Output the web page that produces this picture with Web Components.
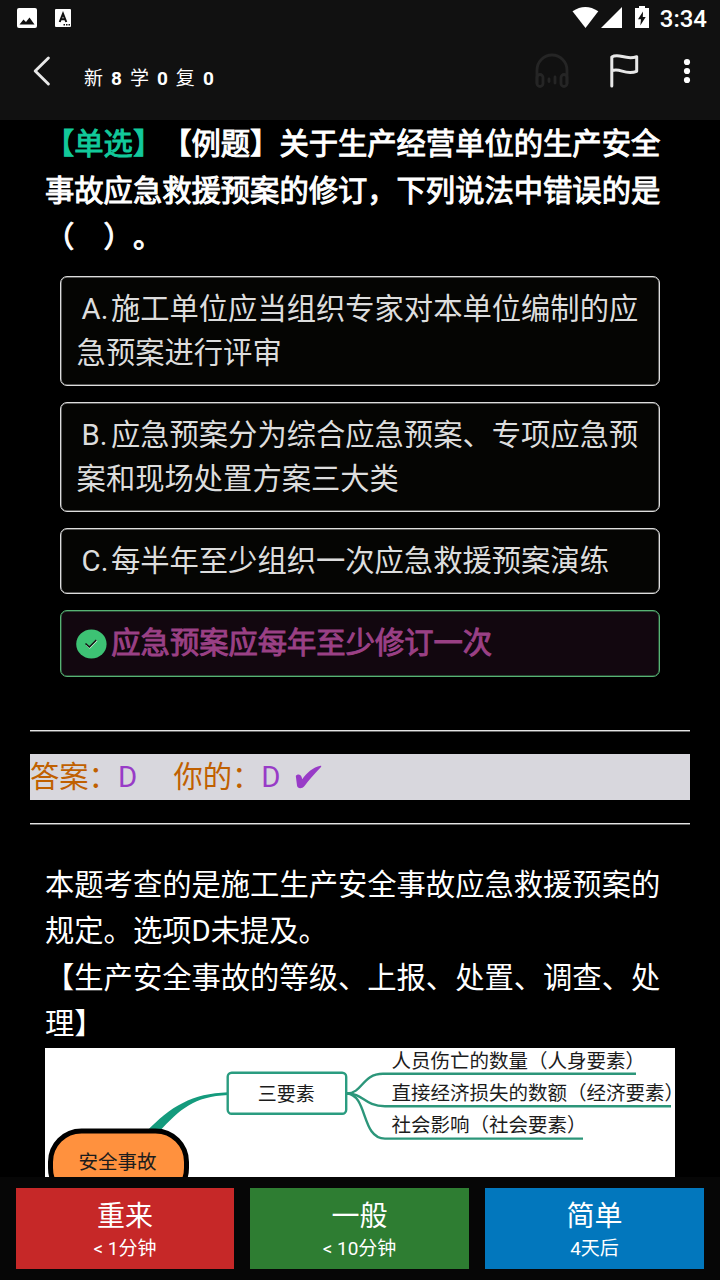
<!DOCTYPE html>
<html lang="zh-CN">
<head>
<meta charset="utf-8">
<title>复习</title>
<style>
    html, body {
        margin: 0;
        background: #000;
    }

    body {
        width: 720px;
        height: 1280px;
        overflow: hidden;
        color: #fff;
        font-family: Roboto, "Noto Sans CJK SC", sans-serif;
        text-spacing-trim: space-all;
    }
</style>
</head>
<body>
<quiz-app></quiz-app>
<script>
class StatusBar extends HTMLElement {
    constructor() {
        super();
        this.root = this.attachShadow({ mode: "open" });
    }

    connectedCallback() {
        this.root.innerHTML = `
            <style>
                :host {
                    display: flex;
                    justify-content: space-between;
                    height: 36px;
                    font-size: 24px;
                    font-weight: 500;
                    line-height: 38px;
                }

                svg {
                    display: block;
                }

                .right {
                    display: flex;
                    padding-right: 13px;
                }
            </style>
            <svg width="80" height="36">
                <rect x="17" y="8" width="20" height="20" rx="2" fill="#fff"/>
                <path d="M19.5 24.5L23.5 19.5L26 22L29.5 17.5L34.5 24.5Z" fill="#111"/>
                <rect x="55" y="9" width="16" height="18" rx="1" fill="#fff"/>
                <path d="M59.7 22L63 13.8L66.3 22M61 19.2H65" fill="none" stroke="#111" stroke-width="2"/>
                <path d="M63.5 24.7H70" stroke="#111" stroke-width="1.5" stroke-dasharray="1.5 1"/>
            </svg>
            <div class="right">
                <svg width="88" height="36">
                    <path d="M0.5 11.3Q13.3 2.5 26.3 11.3L13.5 28Z" fill="#fff"/>
                    <path d="M29 28L50 7V28Z" fill="#fff"/>
                    <path d="M63 8H67V6H73V8H77V28H63Z" fill="#fff"/>
                    <path d="M71 11.5L66 19.3H69L68.3 25.5L73.7 17H70.8Z" fill="#111"/>
                </svg>
                <span>3:34</span>
            </div>
        `;
    }
}

class ToolBar extends HTMLElement {
    constructor() {
        super();
        this.root = this.attachShadow({ mode: "open" });
    }

    connectedCallback() {
        this.root.innerHTML = `
            <style>
                :host {
                    display: flex;
                    height: 84px;
                }

                svg {
                    display: block;
                }

                .counts {
                    flex: 1;
                    padding-top: 30px;
                    font-size: 19px;
                    line-height: 26px;
                    word-spacing: 3.3px;
                    white-space: nowrap;
                }
            </style>
            <svg width="84" height="84">
                <path d="M48.4 22L35.2 35L48.4 48" fill="none" stroke="#e8e8e8" stroke-width="2.9" stroke-linecap="round" stroke-linejoin="round"/>
            </svg>
            <div class="counts"><slot></slot></div>
            <svg width="190" height="84" fill="none" stroke-linecap="round" stroke-linejoin="round">
                <g stroke="#252525" stroke-width="2.8">
                    <path d="M7 47V34A15 15 0 0 1 37 34V47"/>
                    <rect x="7" y="38.5" width="6" height="12" rx="3"/>
                    <rect x="31" y="38.5" width="6" height="12" rx="3"/>
                    <path d="M19 43V45.5M25 41V47"/>
                </g>
                <path d="M81.8 50V21C89 16.5 95 24.5 106.7 20.7V35.3C95 40 90 31 82 34.7" stroke="#e8e8e8" stroke-width="3"/>
                <g fill="#fff">
                    <circle cx="157" cy="26" r="3.1"/>
                    <circle cx="157" cy="35" r="3.1"/>
                    <circle cx="157" cy="44" r="3.1"/>
                </g>
            </svg>
        `;
    }
}

class QuizOption extends HTMLElement {
    constructor() {
        super();
        this.root = this.attachShadow({ mode: "open" });
    }

    connectedCallback() {
        const letter = this.getAttribute("letter");
        const mark = letter
            ? `<span class="letter">${letter}.</span>`
            : `<svg class="tick" width="31" height="30">
                    <ellipse cx="15.4" cy="15" rx="15.2" ry="14.5" fill="#3dc274"/>
                    <path d="M10.2 15.5L13.7 19L21 11.5" fill="none" stroke="#d8f5e3" stroke-width="1.2"/>
                    <path d="M9.5 14.5L13.4 18L20.3 11" fill="none" stroke="#101010" stroke-width="1.5"/>
                </svg>`;
        this.root.innerHTML = `
            <style>
                :host {
                    display: block;
                    box-sizing: border-box;
                    border: 1px solid #ddd;
                    border-radius: 7px;
                    box-shadow: inset 0 0 0 0.5px #aaa;
                    padding: 10px 15px 10px 15.6px;
                    background: #050503;
                    color: #ddd;
                    line-height: 44px;
                }

                :host([correct]) {
                    border-color: #57b374;
                    box-shadow: inset 0 0 0 0.5px #3f8556;
                    background: #12070f;
                    color: #9a4085;
                    -webkit-text-stroke: 1px #9a4085;
                }

                .letter {
                    display: inline-block;
                    box-sizing: border-box;
                    width: 34.3px;
                    padding-left: 5px;
                }

                .tick {
                    margin: 0 4.7px 0 -1px;
                    vertical-align: -6px;
                }
            </style>
            ${mark}<slot></slot>
        `;
    }
}

class AnswerLine extends HTMLElement {
    constructor() {
        super();
        this.root = this.attachShadow({ mode: "open" });
    }

    connectedCallback() {
        this.root.innerHTML = `
            <style>
                :host {
                    display: block;
                    line-height: 46.4px;
                }

                .rule {
                    height: 1px;
                    background: #e4e4e4;
                    box-shadow: 0 1px #666;
                }

                .band {
                    margin: 23px 0 22.6px;
                    background: #d8d7dd;
                    color: #c06000;
                    white-space: pre;
                }

                b {
                    font-weight: 400;
                    color: #983bc7;
                }

                svg {
                    vertical-align: -2px;
                }
            </style>
            <div class="rule"></div>
            <div class="band">答案：<b>${this.getAttribute("answer")}</b>     你的：<b>${this.getAttribute("yours")}</b>  <svg width="27" height="24" fill="#983bc7"><path d="M0.8 11C2.5 8.5 6.5 9 7.2 14.2C12 8 18 2 25.5 0.8C26.3 0.7 26.5 1.3 26 1.9C19 9 14 15 9.5 21C7 24 2.5 24 2 20.5Z"/></svg></div>
            <div class="rule"></div>
        `;
    }
}

class MindMap extends HTMLElement {
    constructor() {
        super();
        this.root = this.attachShadow({ mode: "open" });
    }

    connectedCallback() {
        this.root.innerHTML = `
            <style>
                :host {
                    display: block;
                    background: #fff;
                }

                svg {
                    display: block;
                    overflow: visible;
                }

                text {
                    font-family: "Noto Sans CJK SC", sans-serif;
                    font-size: 19.5px;
                    fill: #1c1c1c;
                }
            </style>
            <svg width="630" height="180">
                <path d="M101 84C126 58 147 45.5 183 44.2V47C149 48.5 135 61 114 84Z" fill="#149b7d"/>
                <rect x="182.7" y="24.8" width="118.5" height="41" rx="4" fill="#fff" stroke="#2a9c80" stroke-width="2.4"/>
                <g fill="none" stroke="#2c967a" stroke-width="2.4">
                    <path d="M302 45.5C318 45 317 25.8 338 25.8H591"/>
                    <path d="M302 45.5C318 45 319 58.2 340 58.2H626"/>
                    <path d="M302 45.5C323 47 316 90.6 340 90.6H538"/>
                </g>
                <rect x="5.5" y="83" width="136" height="68" rx="31" fill="#ff913e" stroke="#000" stroke-width="5"/>
                <text x="33.5" y="121">安全事故</text>
                <text x="212.7" y="52.5" style="font-size: 19px">三要素</text>
                <text x="346.5" y="19.5">人员伤亡的数量（人身要素）</text>
                <text x="346.5" y="51.8">直接经济损失的数额（经济要素）</text>
                <text x="346.5" y="84">社会影响（社会要素）</text>
            </svg>
        `;
    }
}

class GradeButton extends HTMLElement {
    constructor() {
        super();
        this.root = this.attachShadow({ mode: "open" });
    }

    connectedCallback() {
        this.root.innerHTML = `
            <style>
                :host {
                    display: flex;
                    flex: 1;
                    flex-direction: column;
                    align-items: center;
                    height: 81px;
                    padding-top: 9px;
                    box-sizing: border-box;
                    background: var(--grade);
                    font-size: 28px;
                    line-height: 39px;
                }

                :host(:first-child) {
                    flex: 0 0 218px;
                }

                small {
                    font-size: 19px;
                    line-height: 26px;
                }
            </style>
            <span><slot></slot></span>
            <small>${this.getAttribute("due")}</small>
        `;
    }
}

class QuizApp extends HTMLElement {
    constructor() {
        super();
        this.root = this.attachShadow({ mode: "open" });
    }

    connectedCallback() {
        this.root.innerHTML = `
            <style>
                :host {
                    display: flex;
                    flex-direction: column;
                    height: 1280px;
                }

                header {
                    height: 120px;
                    background: #111;
                }

                main {
                    flex: 1;
                    min-height: 0;
                    overflow: hidden;
                    font-size: 29.3px;
                    line-height: 46.5px;
                }

                .question {
                    margin: 0 45px;
                    padding-top: 1px;
                    -webkit-text-stroke: 1px currentColor;
                }

                .kind {
                    color: #12c99b;
                }

                .options {
                    display: flex;
                    flex-direction: column;
                    gap: 16px;
                    margin: 15.5px 60px 53px;
                }

                .options quiz-option:last-child {
                    margin-top: 0.4px;
                    padding-bottom: 10.6px;
                }

                answer-line {
                    margin: 0 30px;
                }

                .explain {
                    margin: 37.6px 45px 0;
                }

                footer {
                    display: flex;
                    gap: 16px;
                    height: 103px;
                    box-sizing: border-box;
                    padding: 11px 16px 0;
                    background: #060606;
                }
            </style>
            <header>
                <status-bar></status-bar>
                <tool-bar>新 <b>8</b> 学 <b>0</b> 复 <b>0</b></tool-bar>
            </header>
            <main>
                <div class="question"><span class="kind">【单选】</span>【例题】关于生产经营单位的生产安全<br>事故应急救援预案的修订，下列说法中错误的是<br>（　）。</div>
                <div class="options">
                    <quiz-option letter="A">施工单位应当组织专家对本单位编制的应急预案进行评审</quiz-option>
                    <quiz-option letter="B">应急预案分为综合应急预案、专项应急预案和现场处置方案三大类</quiz-option>
                    <quiz-option letter="C">每半年至少组织一次应急救援预案演练</quiz-option>
                    <quiz-option correct>应急预案应每年至少修订一次</quiz-option>
                </div>
                <answer-line answer="D" yours="D"></answer-line>
                <div class="explain">
                    本题考查的是施工生产安全事故应急救援预案的<br>规定。选项D未提及。<br>【生产安全事故的等级、上报、处置、调查、处<br>理】
                    <mind-map></mind-map>
                </div>
            </main>
            <footer>
                <grade-button due="&lt; 1分钟" style="--grade: #c62828">重来</grade-button>
                <grade-button due="&lt; 10分钟" style="--grade: #2e7d32">一般</grade-button>
                <grade-button due="4天后" style="--grade: #0277bd">简单</grade-button>
            </footer>
        `;
    }
}

window.customElements.define("status-bar", StatusBar);
window.customElements.define("tool-bar", ToolBar);
window.customElements.define("quiz-option", QuizOption);
window.customElements.define("answer-line", AnswerLine);
window.customElements.define("mind-map", MindMap);
window.customElements.define("grade-button", GradeButton);
window.customElements.define("quiz-app", QuizApp);
</script>
</body>
</html>
